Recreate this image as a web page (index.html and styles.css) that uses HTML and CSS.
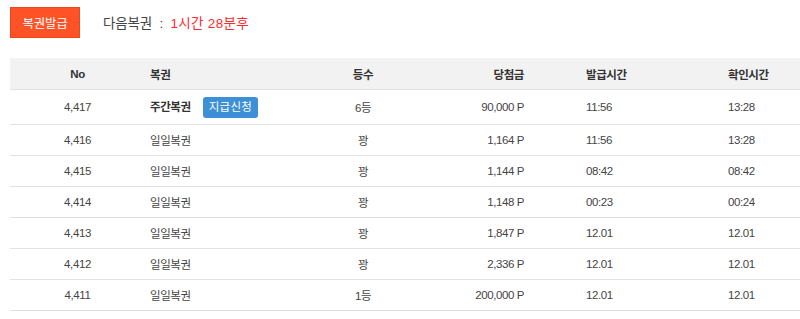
FILE: index.html
```html
<!DOCTYPE html>
<html lang="ko">
<head>
<meta charset="utf-8">
<title>복권</title>
<link rel="stylesheet" href="styles.css">
</head>
<body>
<div class="page">
  <div class="topbar">
    <button class="issue-btn">복권발급</button>
    <div class="next">다음복권 <span class="colon">:</span> <span class="remain">1시간 28분후</span></div>
  </div>
  <table class="lotto">
    <colgroup>
      <col class="c-no"><col class="c-name"><col class="c-rank"><col class="c-prize"><col class="c-issue"><col class="c-check">
    </colgroup>
    <thead>
      <tr>
        <th class="no">No</th>
        <th class="name">복권</th>
        <th class="rank">등수</th>
        <th class="prize">당첨금</th>
        <th class="issue">발급시간</th>
        <th class="check">확인시간</th>
      </tr>
    </thead>
    <tbody>
      <tr class="first">
        <td class="no">4,417</td>
        <td class="name"><strong>주간복권</strong><span class="badge">지급신청</span></td>
        <td class="rank">6등</td>
        <td class="prize">90,000 P</td>
        <td class="issue">11:56</td>
        <td class="check">13:28</td>
      </tr>
      <tr>
        <td class="no">4,416</td><td class="name">일일복권</td><td class="rank">꽝</td><td class="prize">1,164 P</td><td class="issue">11:56</td><td class="check">13:28</td>
      </tr>
      <tr>
        <td class="no">4,415</td><td class="name">일일복권</td><td class="rank">꽝</td><td class="prize">1,144 P</td><td class="issue">08:42</td><td class="check">08:42</td>
      </tr>
      <tr>
        <td class="no">4,414</td><td class="name">일일복권</td><td class="rank">꽝</td><td class="prize">1,148 P</td><td class="issue">00:23</td><td class="check">00:24</td>
      </tr>
      <tr>
        <td class="no">4,413</td><td class="name">일일복권</td><td class="rank">꽝</td><td class="prize">1,847 P</td><td class="issue">12.01</td><td class="check">12.01</td>
      </tr>
      <tr>
        <td class="no">4,412</td><td class="name">일일복권</td><td class="rank">꽝</td><td class="prize">2,336 P</td><td class="issue">12.01</td><td class="check">12.01</td>
      </tr>
      <tr>
        <td class="no">4,411</td><td class="name">일일복권</td><td class="rank">1등</td><td class="prize">200,000 P</td><td class="issue">12.01</td><td class="check">12.01</td>
      </tr>
    </tbody>
  </table>
</div>
</body>
</html>
```

FILE: styles.css
```css
html, body {
  margin: 0;
  padding: 0;
  background: #ffffff;
}

body {
  font-family: "Liberation Sans", "Noto Sans CJK KR", sans-serif;
  color: #444444;
  overflow: hidden;
}

.page {
  padding: 7px 0 0 10px;
}

.topbar {
  display: flex;
  align-items: center;
  gap: 23px;
  height: 31px;
}

.issue-btn {
  box-sizing: border-box;
  width: 70px;
  height: 31px;
  padding: 0;
  border: 1px solid #e9481d;
  background: #ff5226;
  color: #ffffff;
  font-family: "Liberation Sans", "Noto Sans CJK KR", sans-serif;
  font-size: 12.5px;
  letter-spacing: -0.3px;
  cursor: pointer;
}

.next {
  font-size: 13.5px;
  color: #444444;
  letter-spacing: -0.2px;
  padding-bottom: 2px;
}

.next .colon {
  margin: 0 4px;
}

.next .remain {
  color: #ff2b2b;
  letter-spacing: 0.3px;
}

.lotto {
  margin-top: 20px;
  width: 790px;
  border-collapse: collapse;
  table-layout: fixed;
  font-size: 11.5px;
  letter-spacing: -0.4px;
}

.c-no { width: 135px; }
.c-name { width: 155px; }
.c-rank { width: 126px; }
.c-prize { width: 104px; }
.c-issue { width: 198px; }
.c-check { width: 72px; }

.lotto th {
  height: 31px;
  padding: 0;
  background: #f2f2f2;
  font-weight: bold;
  color: #333333;
  border-bottom: 1px solid #e2e2e2;
}

.lotto td {
  height: 30px;
  padding: 0;
  border-bottom: 1px solid #e2e2e2;
  color: #444444;
}

.lotto tr.first td {
  height: 34px;
}

.lotto .no { text-align: center; }
.lotto .name { text-align: left; padding-left: 5px; }
.lotto .rank { text-align: center; }
.lotto .prize { text-align: right; padding-right: 6px; }
.lotto .issue { text-align: left; padding-left: 56px; }
.lotto .check { text-align: left; }

.lotto strong {
  font-weight: bold;
  color: #333333;
}

.badge {
  display: inline-block;
  margin-left: 12px;
  padding: 0 6px;
  height: 21px;
  line-height: 21px;
  background: #3d8fd6;
  border-radius: 3px;
  color: #ffffff;
  font-size: 11.5px;
  letter-spacing: 0.3px;
  vertical-align: middle;
}
```
